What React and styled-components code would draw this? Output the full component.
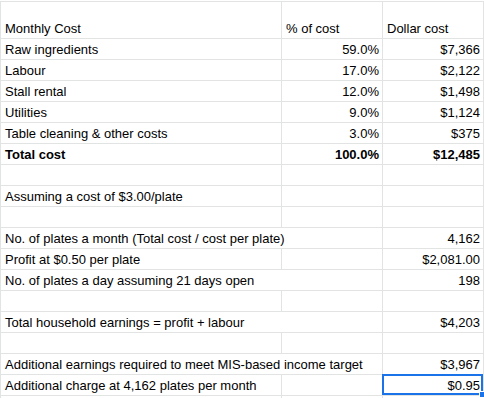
import styled, { createGlobalStyle } from 'styled-components'

const GlobalStyle = createGlobalStyle`
    html, body {
        margin: 0;
        padding: 0;
        background: #ffffff;
    }
    body {
        font-family: "Liberation Sans", Arial, sans-serif;
        overflow: hidden;
    }
`

const Sheet = styled.div`
    width: 484px;
    margin-top: 1px;
    display: grid;
    grid-template-columns: 281px 101px 101px;
    grid-template-rows: 37px;
    grid-auto-rows: 21px;
    border-top: 1px solid #e2e3e3;
    border-left: 1px solid #e2e3e3;
    font-size: 13px;
    color: #000000;
`

const Cell = styled.div`
    position: relative;
    display: flex;
    align-items: flex-end;
    justify-content: ${p => p.$right ? 'flex-end' : 'flex-start'};
    grid-column: span ${p => p.$span || 1};
    padding: 0 3px 2px 4px;
    border-right: 1px solid #e2e3e3;
    border-bottom: 1px solid #e2e3e3;
    line-height: 15px;
    font-weight: ${p => p.$bold ? 700 : 400};
    white-space: nowrap;
    overflow: ${p => p.$selected ? 'visible' : 'hidden'};

    ${p => p.$selected && `
        &::after {
            content: '';
            position: absolute;
            top: -1px;
            left: -1px;
            right: 0;
            bottom: 0;
            border: 2px solid #1a73e8;
            pointer-events: none;
        }
        &::before {
            content: '';
            position: absolute;
            right: -3px;
            bottom: -3px;
            width: 5px;
            height: 5px;
            background: #1a73e8;
            border: 1px solid #ffffff;
            z-index: 1;
        }
    `}
`

const rows = [
    { a: 'Monthly Cost', b: '% of cost', c: 'Dollar cost', head: true },
    { a: 'Raw ingredients', b: '59.0%', c: '$7,366' },
    { a: 'Labour', b: '17.0%', c: '$2,122' },
    { a: 'Stall rental', b: '12.0%', c: '$1,498' },
    { a: 'Utilities', b: '9.0%', c: '$1,124' },
    { a: 'Table cleaning & other costs', b: '3.0%', c: '$375' },
    { a: 'Total cost', b: '100.0%', c: '$12,485', bold: true },
    {},
    { a: 'Assuming a cost of $3.00/plate' },
    {},
    { a: 'No. of plates a month (Total cost / cost per plate)', c: '4,162', span: 2 },
    { a: 'Profit at $0.50 per plate', c: '$2,081.00' },
    { a: 'No. of plates a day assuming 21 days open', c: '198', span: 2 },
    {},
    { a: 'Total household earnings = profit + labour', c: '$4,203', span: 2 },
    {},
    { a: 'Additional earnings required to meet MIS-based income target', c: '$3,967', span: 2 },
    { a: 'Additional charge at 4,162 plates per month', c: '$0.95', selected: true },
    {},
]

function App() {
    return (
        <>
            <GlobalStyle />
            <Sheet>
                {rows.map((r, i) => [
                    <Cell key={i + 'a'} $span={r.span} $bold={r.bold}>{r.a}</Cell>,
                    r.span ? null : <Cell key={i + 'b'} $right={!r.head} $bold={r.bold}>{r.b}</Cell>,
                    <Cell key={i + 'c'} $right={!r.head} $bold={r.bold} $selected={r.selected}>{r.c}</Cell>,
                ])}
            </Sheet>
        </>
    )
}

export default App
